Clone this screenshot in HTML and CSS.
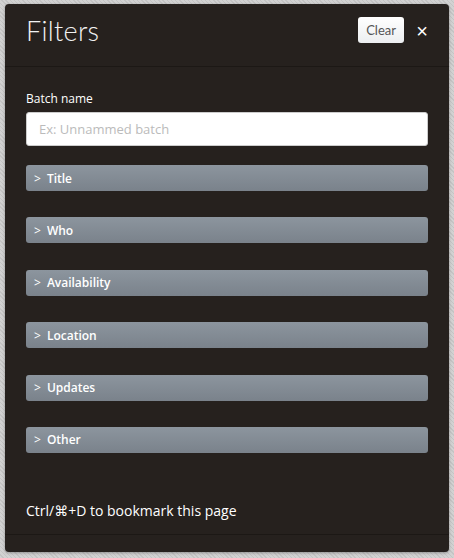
FILE: index.html
```html
<!DOCTYPE html>
<html lang="en">
<head>
    <meta charset="UTF-8">
    <meta name="viewport" content="width=device-width, initial-scale=1.0">
    <title>Filters</title>
    <link rel="stylesheet" href="styles.css">
</head>
<body>
    <div class="panel">
        <div class="panel-header">
            <h1 class="panel-title">Filters</h1>
            <button class="clear-btn">Clear</button>
            <button class="close-btn">&times;</button>
        </div>

        <div class="panel-body">
            <label class="field-label" for="batch">Batch name</label>
            <input class="field-input" id="batch" type="text" placeholder="Ex: Unnammed batch">

            <div class="section"><span class="chevron">&gt;</span>Title</div>
            <div class="section"><span class="chevron">&gt;</span>Who</div>
            <div class="section"><span class="chevron">&gt;</span>Availability</div>
            <div class="section"><span class="chevron">&gt;</span>Location</div>
            <div class="section"><span class="chevron">&gt;</span>Updates</div>
            <div class="section"><span class="chevron">&gt;</span>Other</div>

            <p class="hint">Ctrl/&#8984;+D to bookmark this page</p>
        </div>

        <div class="panel-footer"></div>
    </div>
</body>
</html>
```

FILE: styles.css
```css
body {
    margin: 0;
    padding: 4px 5px 6px;
    font-family: 'Open Sans', 'DejaVu Sans', sans-serif;
    background: repeating-linear-gradient(45deg, #d2d2d2 0, #d2d2d2 2px, #c4c4c4 2px, #c4c4c4 3px);
    height: 558px;
    box-sizing: border-box;
}

.panel {
    background: #26211e;
    border-radius: 4px;
    height: 548px;
    display: flex;
    flex-direction: column;
    box-shadow: 0 1px 3px rgba(0, 0, 0, 0.3);
}

.panel-header {
    display: flex;
    align-items: flex-start;
    height: 53px;
    padding: 9px 21px 0 21px;
    border-bottom: 1px solid #1c1815;
}

.panel-title {
    flex: 1;
    margin: 0;
    color: #f2f2f2;
    font-family: 'Lato', sans-serif;
    font-weight: 300;
    font-size: 27px;
    line-height: 36px;
    letter-spacing: 0.3px;
}

.clear-btn {
    background: linear-gradient(#ffffff, #eceef0);
    color: #555;
    border: none;
    border-radius: 3px;
    height: 26px;
    margin-top: 4px;
    padding: 0 8px;
    font-family: 'Lato', sans-serif;
    font-size: 13px;
    margin-right: 12px;
}

.close-btn {
    background: none;
    border: none;
    color: #fff;
    font-size: 20px;
    padding: 0;
    width: 12px;
    line-height: 36px;
}

.panel-body {
    padding: 23px 21px 0;
    display: flex;
    flex-direction: column;
}

.field-label {
    color: #fff;
    font-size: 12px;
    font-weight: 500;
    margin-bottom: 5px;
}

.field-input {
    height: 34px;
    border: 1px solid #ccc;
    border-radius: 3px;
    padding: 0 12px;
    font-family: 'Open Sans', sans-serif;
    font-size: 13px;
    margin: 0 0 19px;
    box-sizing: border-box;
}

.field-input::placeholder {
    color: #bbb;
}

.section {
    height: 26px;
    margin-bottom: 26.4px;
    border-radius: 3px;
    background: linear-gradient(#8c959e, #7a828b);
    color: #fff;
    font-size: 12px;
    font-weight: 600;
    display: flex;
    align-items: center;
    padding-left: 8px;
}

.chevron {
    font-weight: 400;
    margin-right: 6px;
    font-size: 12px;
}

.hint {
    margin: 22px 0 14px;
    color: #fff;
    font-size: 14px;
}

.panel-footer {
    flex: 1;
    border-top: 1px solid #1c1815;
}
```
